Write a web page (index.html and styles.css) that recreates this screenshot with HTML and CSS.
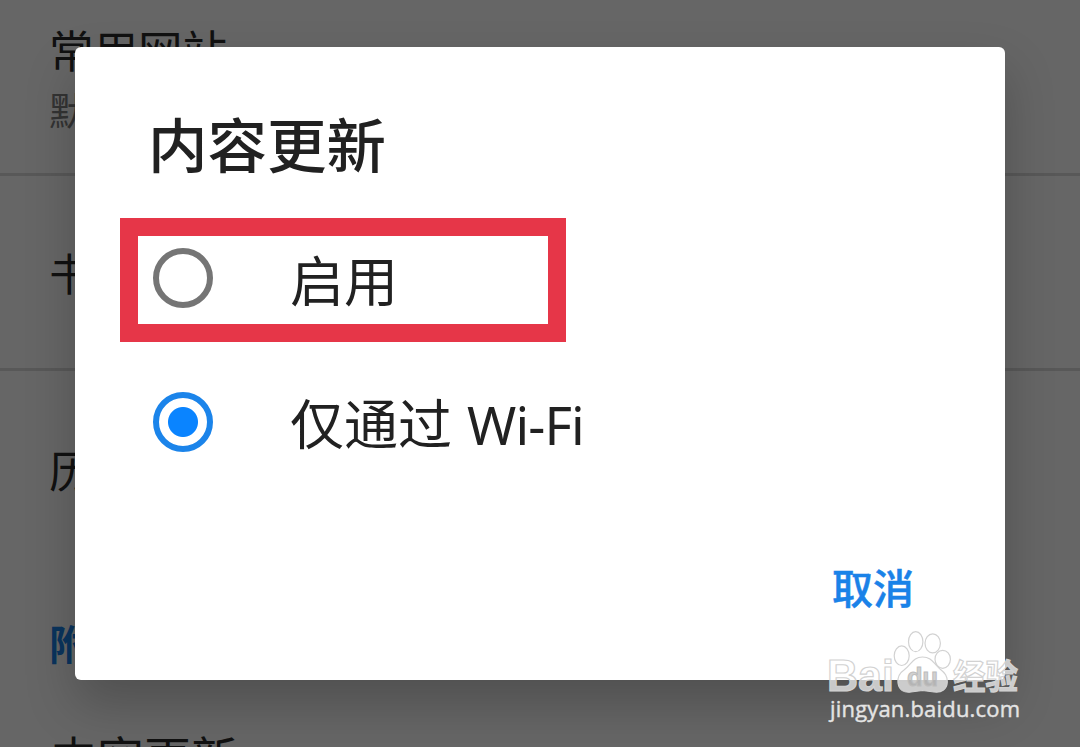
FILE: index.html
```
<!DOCTYPE html>
<html lang="zh-CN">
<head>
    <meta charset="UTF-8">
    <meta name="viewport" content="width=device-width, initial-scale=1.0">
    <title>内容更新</title>
    <link rel="stylesheet" href="styles.css">
</head>
<body>

<!-- Settings list -->
<div class="settings">
    <div class="row row-first">
        <h3>常用网站</h3>
        <p>默认</p>
    </div>
    <div class="row row-line">
        <h3>书签</h3>
    </div>
    <div class="row">
        <h3>历史</h3>
    </div>
    <div class="section-name">附加</div>
    <div class="row row-last">
        <h3>内容更新</h3>
    </div>
</div>

<!-- Dialog -->
<div class="overlay">
    <div class="dialog">
        <h1 class="title">内容更新</h1>
        <div class="options">
            <div class="option">
                <span class="radio"></span>
                <span class="label">启用</span>
            </div>
            <div class="option">
                <span class="radio checked"></span>
                <span class="label">仅通过 <span class="latin">Wi-Fi</span></span>
            </div>
            <div class="highlight"></div>
        </div>
        <div class="actions">
            <button class="cancel">取消</button>
        </div>
    </div>
</div>

<!-- Watermark -->
<svg class="watermark" width="220" height="110" viewBox="0 0 220 110">
    <g class="mark">
        <text class="bai" x="5" y="71" textLength="67" lengthAdjust="spacingAndGlyphs">Bai</text>
        <ellipse cx="79.7" cy="35.7" rx="7.5" ry="9.8"/>
        <ellipse cx="93.7" cy="21.7" rx="7.2" ry="10"/>
        <ellipse cx="110.7" cy="23.3" rx="7.7" ry="9.5"/>
        <ellipse cx="120.7" cy="39.3" rx="7.7" ry="9"/>
        <path d="M100.5 37C91 37 90 44 82 50C76 54 75.500 59 76 63C77 70 82 73 89 72L100.500 70.500L112 72C120 73 125 69 125.300 62C125.500 56 123 53 118 49C111 43 110 37 100.500 37Z"/>
        <text class="jy" x="131" y="69" textLength="65" lengthAdjust="spacingAndGlyphs">经验</text>
    </g>
    <text class="du" x="85" y="66" textLength="31" lengthAdjust="spacingAndGlyphs">du</text>
    <text class="url" x="8" y="97" textLength="190">jingyan.baidu.com</text>
</svg>

</body>
</html>
```

FILE: styles.css
```
* {
    margin: 0;
    padding: 0;
    box-sizing: border-box;
    font-family: "Noto Sans CJK SC", sans-serif;
}

body {
    width: 1080px;
    height: 747px;
    background: #fff;
    overflow: hidden;
    position: relative;
}

/* Settings list */
.settings {
    height: 747px;
    overflow: hidden;
}

.row {
    height: 196px;
    padding-left: 49px;
    display: flex;
    flex-direction: column;
    justify-content: center;
}

.row h3 {
    font-size: 44.5px;
    font-weight: 400;
    line-height: 60px;
    color: #2c2c2c;
}

.row p {
    font-size: 38px;
    line-height: 60px;
    color: #808080;
}

.row-first {
    height: 176px;
    justify-content: flex-start;
    padding-top: 19px;
    border-bottom: 3px solid #dcdcdc;
}

.row-line {
    height: 195px;
    border-bottom: 3px solid #dcdcdc;
}

.section-name {
    height: 152px;
    padding: 45px 0 0 49px;
    font-size: 41px;
    font-weight: 700;
    line-height: 60px;
    color: #1a82e8;
}

.row-last {
    height: 100px;
    justify-content: flex-start;
    padding: 7px 0 0 50px;
}

.row-last h3 {
    font-size: 47px;
}

/* Dialog */
.overlay {
    position: absolute;
    inset: 0;
    padding: 47px 75px 67px;
    background: rgba(0, 0, 0, 0.6);
}

.dialog {
    height: 633px;
    padding: 59px 72px 0;
    background: #fff;
    border-radius: 6px;
    box-shadow: 0 24px 50px rgba(0, 0, 0, 0.22);
}

.title {
    padding-left: 1px;
    font-size: 59.5px;
    font-weight: 500;
    line-height: 72px;
    color: #212121;
}

.options {
    margin-top: 28px;
    position: relative;
}

.option {
    height: 144px;
    padding-left: 6px;
    display: flex;
    align-items: center;
    gap: 77px;
}

.radio {
    width: 60px;
    height: 60px;
    border: 6px solid #757575;
    border-radius: 50%;
}

.radio.checked {
    border-color: #1b84ea;
    background: radial-gradient(circle, #0a84ff 14.5px, transparent 15.5px);
}

.label {
    padding-top: 2px;
    font-size: 54px;
    line-height: 72px;
    color: #212121;
}

.latin {
    margin-left: 3px;
    font-family: "Noto Sans", sans-serif;
    font-size: 53px;
    letter-spacing: -0.9px;
}

/* Red frame over the first option */
.highlight {
    position: absolute;
    left: -27px;
    top: 12px;
    width: 446px;
    height: 124px;
    border: 18px solid #e63648;
}

.actions {
    display: flex;
    justify-content: flex-end;
    margin-top: 62px;
    padding-right: 19px;
}

.cancel {
    border: none;
    background: none;
    font-size: 41px;
    font-weight: 500;
    line-height: 60px;
    color: #1a82e8;
    -webkit-text-stroke: 0.5px #1a82e8;
}

/* Watermark */
.watermark {
    position: absolute;
    left: 822px;
    top: 620px;
}

.mark {
    fill: rgba(255, 255, 255, 0.7);
    stroke: #d2d2d2;
    stroke-width: 1.2;
}

.bai {
    font-family: "Liberation Sans", sans-serif;
    font-size: 44px;
    font-weight: bold;
}

.jy {
    font-size: 34px;
    font-weight: 700;
}

.du {
    font-family: "Liberation Sans", sans-serif;
    font-size: 26px;
    font-weight: bold;
    fill: rgba(150, 150, 150, 0.45);
    stroke: #bdbdbd;
    stroke-width: 1;
}

.url {
    font-family: "Open Sans", sans-serif;
    font-size: 22px;
    fill: #e4e4e4;
    stroke: #e4e4e4;
    stroke-width: 0.4;
}
```
